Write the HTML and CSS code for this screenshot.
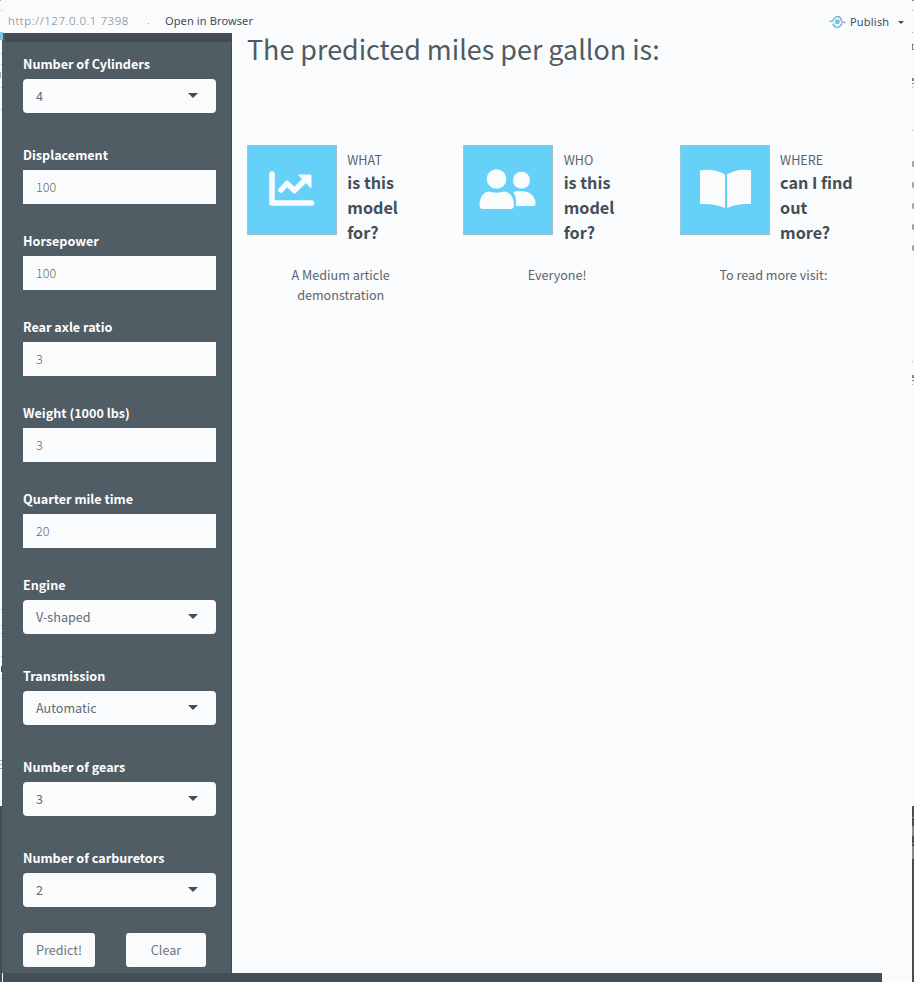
FILE: index.html
```html
<!DOCTYPE html>
<html lang="en">
<head>
<meta charset="utf-8">
<title>MPG prediction</title>
<link rel="stylesheet" href="styles.css">
</head>
<body>
<div class="window">
  <header class="toolbar">
    <span class="url">http://127.0.0.1&nbsp;7398</span>
    <span class="sep"></span>
    <span class="open">Open in Browser</span>
    <span class="publish">
      <svg class="publish-icon" width="17" height="14" viewBox="0 0 17 14" fill="none" stroke-width="1.5">
        <path d="M0.500 6.200H3C4.800 5.800 4.500 2.200 8 1.500" stroke="#6fbfdc"/>
        <path d="M8 1.500C12 1 11.800 4 12.800 6.500C13.200 7.500 14.500 7.700 16.300 7.500" stroke="#8fa9b3"/>
        <path d="M3.800 8.500C4.800 10 5 12.300 8.500 12.400" stroke="#6fbfdc"/>
        <path d="M8.500 12.400C11.500 12.300 12 10 13 8.500" stroke="#8fa9b3"/>
        <circle cx="8.300" cy="6.800" r="2.500" fill="#65c9ee"/>
      </svg>
      <span class="publish-text">Publish</span>
      <i class="mini-caret"></i>
    </span>
  </header>
  <div class="body">
    <aside class="sidebar">
      <div class="strip"></div>
      <form class="fields">
        <div class="field pick"><label>Number of Cylinders</label><div class="box">4<i class="caret"></i></div></div>
        <div class="field"><label>Displacement</label><div class="box num">100</div></div>
        <div class="field"><label>Horsepower</label><div class="box num">100</div></div>
        <div class="field"><label>Rear axle ratio</label><div class="box num">3</div></div>
        <div class="field"><label>Weight (1000 lbs)</label><div class="box num">3</div></div>
        <div class="field"><label>Quarter mile time</label><div class="box num">20</div></div>
        <div class="field pick"><label>Engine</label><div class="box">V-shaped<i class="caret"></i></div></div>
        <div class="field pick"><label>Transmission</label><div class="box">Automatic<i class="caret"></i></div></div>
        <div class="field pick"><label>Number of gears</label><div class="box">3<i class="caret"></i></div></div>
        <div class="field pick last"><label>Number of carburetors</label><div class="box">2<i class="caret"></i></div></div>
        <div class="buttons"><span class="btn predict">Predict!</span><span class="btn clear">Clear</span></div>
      </form>
    </aside>
    <main class="main">
      <h1>The predicted miles per gallon is:</h1>
      <div class="cards">
        <section class="card">
          <div class="info">
            <div class="tile">
              <svg width="90" height="90" viewBox="0 0 90 90" fill="none" stroke="#fafbfd" stroke-width="5.500" stroke-linecap="round" stroke-linejoin="round">
                <path d="M25 29V58H64.500"/>
                <path d="M34 45L40 38.500L47.500 45.500L57 36"/>
                <path d="M52 30H64V42.500Z" fill="#fafbfd" stroke-width="1"/>
              </svg>
            </div>
            <div class="copy"><span>WHAT</span><strong>is this<br>model<br>for?</strong></div>
          </div>
          <p>A Medium article<br>demonstration</p>
        </section>
        <section class="card">
          <div class="info">
            <div class="tile">
              <svg width="90" height="90" viewBox="0 0 90 90" fill="#fafbfd">
                <circle cx="33.500" cy="34" r="9.800"/>
                <circle cx="58.500" cy="35.300" r="8.500"/>
                <path d="M20 64C17.500 64 16.500 62.500 16.500 60C17 52 20.500 46.500 26 46.500C30 48 37 48 41 46.500C47 46.500 51 53 51 60C51 62.500 50 64 47.500 64Z"/>
                <path d="M50 46.700C61 45.500 66 46.500 69 50C71.500 53 73 56 72.500 58.500C72.300 60.300 71.500 61 70 61H53C53.300 55 53 51 50 46.700Z"/>
              </svg>
            </div>
            <div class="copy"><span>WHO</span><strong>is this<br>model<br>for?</strong></div>
          </div>
          <p>Everyone!</p>
        </section>
        <section class="card">
          <div class="info">
            <div class="tile">
              <svg width="90" height="90" viewBox="0 0 90 90" fill="#fafbfd">
                <path d="M20 25.500C29 23.500 38 25.500 45 29.500V63C38 59.500 29 58.500 20 59Z"/>
                <path d="M71 25.500C62 23.500 54 25.500 47 29.500V63C54 59.500 62 58.500 71 59Z"/>
              </svg>
            </div>
            <div class="copy"><span>WHERE</span><strong>can I find<br>out<br>more?</strong></div>
          </div>
          <p>To read more visit:</p>
        </section>
      </div>
    </main>
  </div>
  <div class="bottom"></div>
  <svg class="edge left" width="3" height="982" viewBox="0 0 3 982">
    <path d="M0 0H1V1H0ZM1 10H2V11H1ZM1 53H2V54H1ZM1 64H2V65H1ZM0 72H1V78H0ZM1 87H2V88H1ZM1 109H2V110H1ZM1 609H2V610H1ZM1 625H2V626H1ZM1 633H2V634H1ZM1 656H2V657H1ZM1 678H2V679H1ZM0 760H2V761H0ZM0 764H2V765H0ZM0 768H2V769H0Z" fill="#a3abb0"/>
    <path d="M1 666H2V672H1ZM0 806H2V982H0Z" fill="#444e57"/>
    <path d="M0 32H3V40H0Z" fill="#7ac5df"/>
  </svg>
  <svg class="edge right" width="2" height="982" viewBox="0 0 2 982">
    <path d="M0 0H2V1H0ZM0 44H2V45H0ZM0 44H1V50H0ZM0 49H2V50H0ZM0 78H2V81H0ZM0 83H2V84H0ZM0 375H2V378H0ZM0 380H2V381H0Z" fill="#7b858b"/>
    <path d="M0 10H1V11H0ZM0 32H1V33H0ZM0 87H1V88H0ZM0 130H1V131H0ZM0 361H1V362H0ZM0 384H1V385H0Z" fill="#a0b5bf"/>
    <path d="M0 162L1 161H2V167H1L0 166ZM0 183L1 182H2V188H1L0 187ZM0 204L1 203H2V209H1L0 208ZM0 225L1 224H2V230H1L0 229ZM0 246L1 245H2V251H1L0 250Z" fill="#9aa8ad"/>
    <path d="M0 806H2V982H0Z" fill="#444e57"/>
    <path d="M0 817H2V818H0ZM0 826H2V836H0ZM0 843H2V844H0ZM0 846H2V859H0Z" fill="#858b8f"/>
  </svg>
</div>
</body>
</html>
```
FILE: styles.css
```css
* { box-sizing: border-box; }
body {
  margin: 0;
  background: #fafbfd;
  color: #4f5b63;
  font-family: "Noto Sans CJK SC", "Open Sans", sans-serif;
}
.window {
  position: relative;
  width: 914px;
  height: 982px;
  overflow: hidden;
  display: flex;
  flex-direction: column;
}
.toolbar {
  height: 33px;
  flex: none;
  display: flex;
  align-items: center;
  padding: 10px 10px 0 8px;
  font: 11px/24px "Noto Sans", sans-serif;
  color: #3f4b55;
  white-space: nowrap;
}
.url { width: 140px; margin-top: -2px; color: #7c8388; font-weight: 300; font-size: 11.5px; letter-spacing: 0.55px; }
.sep { width: 1px; height: 1px; margin-top: 3px; background: #98a3a9; }
.open { margin-left: 16px; margin-top: -2px; letter-spacing: 0.12px; }
.publish { margin-left: auto; display: flex; align-items: center; }
.publish-text { margin-left: 4px; width: 38px; letter-spacing: 0.2px; }
.mini-caret {
  margin: 2px 0 0 10px;
  border: 3px solid transparent;
  border-top-color: #3f4b55;
  border-bottom: 0;
}
.body { display: flex; height: 940px; flex: none; padding-left: 2px; }
.sidebar {
  width: 230px;
  flex: none;
  background: #515d65;
  border-right: 1px solid #444e57;
}
.strip { height: 9px; margin-left: 3px; background: #444b53; }
.fields { padding: 12px 15px 0 21px; }
.field { margin-bottom: 27px; }
.field label {
  display: block;
  height: 20px;
  margin-bottom: 5px;
  font-size: 12.6px;
  line-height: 20px;
  font-weight: 700;
  color: #fff;
  white-space: nowrap;
}
.box {
  width: 193px;
  height: 34px;
  padding: 0 18px 0 13px;
  display: flex;
  align-items: center;
  justify-content: space-between;
  background: #fafbfd;
  font-size: 12.6px;
  line-height: 34px;
  color: #626c73;
}
.num { font-weight: 300; }
.pick { margin-bottom: 32px; }
.pick .box { border-radius: 4px; }
.last { margin-bottom: 26px; }
.caret {
  margin-top: -1px;
  border: 5px solid transparent;
  border-top-color: #444e57;
  border-bottom: 0;
}
.buttons { display: flex; gap: 31px; }
.btn {
  height: 34px;
  border-radius: 3px;
  background: #fafbfd;
  font-size: 12.6px;
  line-height: 34px;
  color: #6c757b;
  text-align: center;
}
.predict { width: 72px; }
.clear { width: 80px; }
.main { flex: 1; padding-left: 15px; }
h1 {
  margin: 0;
  height: 112px;
  font-size: 26.9px;
  line-height: 32px;
  font-weight: 400;
  white-space: nowrap;
}
.cards { display: flex; }
.card { width: 216.400px; flex: none; }
.info { display: flex; height: 110px; }
.tile {
  width: 90px;
  height: 90px;
  flex: none;
  background: #66d1f8;
  box-shadow: inset -1px -1px #a4bcc7, inset 1px 1px #9dc6d5;
}
.tile svg { display: block; }
.copy { padding: 5px 0 0 10.3px; white-space: nowrap; }
.copy span { display: block; font-size: 12.6px; line-height: 20px; color: #5a646b; }
.copy strong { display: block; font-size: 16.2px; line-height: 25px; color: #444e57; }
.card p {
  margin: 10px 29px 0 0;
  font-size: 12.6px;
  line-height: 20px;
  color: #5a646b;
  text-align: center;
}
.bottom {
  width: 879px;
  height: 9px;
  margin-left: 3px;
  background: #444e57;
}
.edge { position: absolute; top: 0; }
.left { left: 0; }
.right { right: 0; }
```
